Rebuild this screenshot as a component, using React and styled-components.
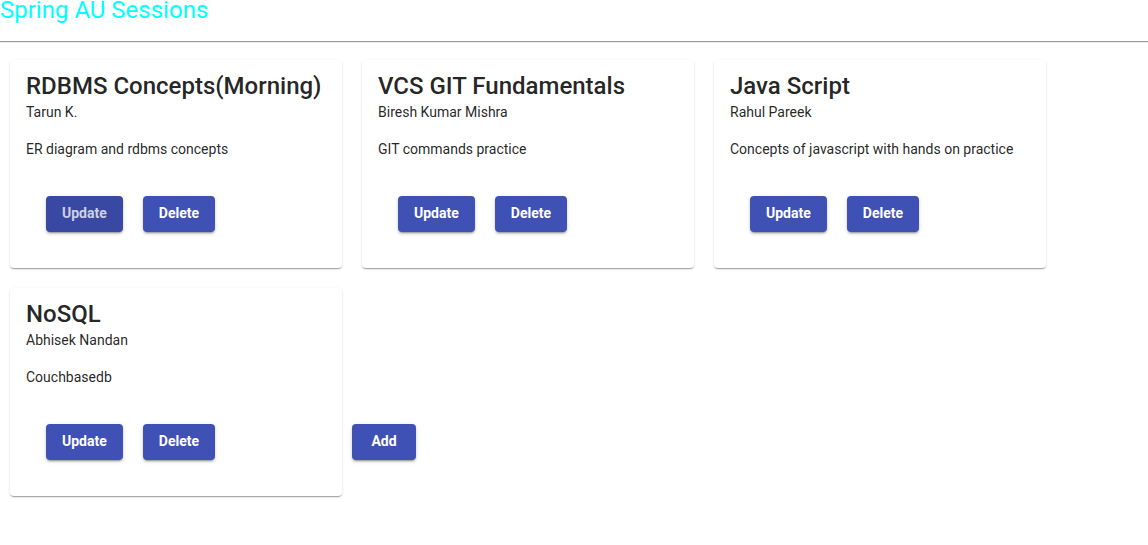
import React from 'react';
import styled, { createGlobalStyle } from 'styled-components';

const GlobalStyle = createGlobalStyle`
  body {
    margin: 0;
    font-family: Roboto, "Liberation Sans", sans-serif;
    background: #fff;
  }
`

const sessions = [
    { id: 1, name: 'RDBMS Concepts(Morning)', trainer: 'Tarun K.', description: 'ER diagram and rdbms concepts' },
    { id: 2, name: 'VCS GIT Fundamentals', trainer: 'Biresh Kumar Mishra', description: 'GIT commands practice' },
    { id: 3, name: 'Java Script', trainer: 'Rahul Pareek', description: 'Concepts of javascript with hands on practice' },
    { id: 4, name: 'NoSQL', trainer: 'Abhisek Nandan', description: 'Couchbasedb' },
]

const App = () => {
    return (
        <>
            <GlobalStyle />
            <Heading>Spring AU Sessions</Heading>
            <Divider />
            <Sessions>
                {sessions.map((session, i) => (
                    <Card key={session.id}>
                        <Title>{session.name}</Title>
                        <Trainer>{session.trainer}</Trainer>
                        <Description>{session.description}</Description>
                        <Actions>
                            <Button $focused={i === 0}>Update</Button>
                            <Button>Delete</Button>
                        </Actions>
                    </Card>
                ))}
                <Button>Add</Button>
            </Sessions>
        </>
    );
};

export default App;

const Heading = styled.h1`
    margin: 0;
    font-size: 24px;
    font-weight: 400;
    line-height: 21px;
    color: #00ffff;
`

const Divider = styled.hr`
    margin: 20px 0 7px;
    border: none;
    border-top: 1px solid #9a9a9a;
    border-bottom: 1px solid #eeeeee;
`

const Sessions = styled.div`
    display: flex;
    flex-wrap: wrap;
    align-items: last baseline;
`

const Card = styled.div`
    width: 332px;
    box-sizing: border-box;
    margin: 10px;
    padding: 15px 16px 0;
    border-radius: 4px;
    background: #fff;
    box-shadow: 0px 2px 1px -1px rgba(0,0,0,0.2), 0px 1px 1px 0px rgba(0,0,0,0.14), 0px 1px 3px 0px rgba(0,0,0,0.12);
    color: rgba(0,0,0,0.87);
`

const Title = styled.div`
    font-size: 24px;
    line-height: 22px;
    font-weight: 500;
    margin-bottom: 5px;
`

const Trainer = styled.div`
    font-size: 14px;
    line-height: 20px;
    margin-bottom: 17px;
`

const Description = styled.div`
    font-size: 14px;
    line-height: 20px;
`

const Actions = styled.div`
    display: flex;
    gap: 20px;
    margin-top: 17px;
    padding: 20px 0 36px 20px;
`

const Button = styled.button`
    min-width: 64px;
    height: 36px;
    padding: 5px 16px 7px;
    border: none;
    border-radius: 4px;
    font-family: Roboto, "Liberation Sans", sans-serif;
    font-size: 14px;
    font-weight: 700;
    line-height: 24px;
    color: ${p => p.$focused ? 'rgba(255,255,255,0.75)' : '#fff'};
    background: ${p => p.$focused ? '#3949a3' : '#3f51b5'};
    box-shadow: 0px 3px 1px -2px rgba(0,0,0,0.2), 0px 2px 2px 0px rgba(0,0,0,0.14), 0px 1px 5px 0px rgba(0,0,0,0.12);
    cursor: pointer;
`
